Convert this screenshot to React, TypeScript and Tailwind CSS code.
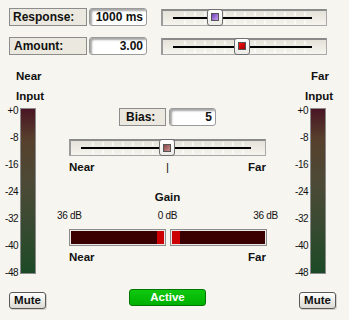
import React from "react";

const FONT = { fontFamily: '"Liberation Sans", Arial, sans-serif' };

function Slider({ width, thumb, color }: { width: number; thumb: number; color: string }) {
  const ticks: number[] = [];
  for (let x = 22; x <= width - 22; x += 10) ticks.push(x);
  return (
    <div
      className="relative h-[17px] border-t-2 border-l-2 border-b border-r border-t-[#8a8a8a] border-l-[#9a9a9a] border-b-[#a8a8a8] border-r-[#a8a8a8] bg-gradient-to-b from-[#e4e2d8] to-[#f5f4ee]"
      style={{ width }}
    >
      <svg className="absolute inset-0" width={width - 3} height={14}>
        {ticks.map((x) => (
          <g key={x}>
            <line x1={x} y1={1} x2={x} y2={5} stroke="#ffffff" strokeWidth={1.2} />
            <line x1={x} y1={9} x2={x} y2={13} stroke="#ffffff" strokeWidth={1.2} />
          </g>
        ))}
        <line x1={10} y1={7} x2={width - 17} y2={7} stroke="#000" strokeWidth={2} />
      </svg>
      <div
        className="absolute top-[-2px] w-[16px] h-[17px] rounded-[3px] border border-[#6e6e6e] bg-gradient-to-b from-white to-[#ecebe6] flex items-center justify-center"
        style={{ left: thumb - 2 }}
      >
        <div className="w-[8px] h-[8px] border border-[#555]" style={{ background: color }} />
      </div>
    </div>
  );
}

function LabelBox({ text, w, pl }: { text: string; w: number; pl: number }) {
  return (
    <div
      className="h-[18px] border border-[#8c8c8c] bg-[#ebe9df] text-[12px] font-bold leading-[16px] text-[#111]"
      style={{ width: w, paddingLeft: pl }}
    >
      {text}
    </div>
  );
}

function ValueBox({ text, w }: { text: string; w: number }) {
  return (
    <div
      className="h-[18px] rounded-[3px] border border-[#9a9a9a] bg-white shadow-[inset_2px_2px_2px_rgba(0,0,0,0.35)] text-right pr-[3px] text-[12px] font-bold leading-[16px] text-[#111]"
      style={{ width: w }}
    >
      {text}
    </div>
  );
}

function Meter() {
  return (
    <div className="w-[16px] h-[166px] border border-[#8a8a8a] bg-[linear-gradient(to_bottom,#4a1424_0%,#56402c_18%,#4c4a36_45%,#3a4a32_70%,#1c4a26_100%)]" />
  );
}

function Scale() {
  const labels = ["+0", "-8", "-16", "-24", "-32", "-40", "-48"];
  return (
    <div className="-mt-[2px] h-[172px] flex flex-col justify-between items-end text-[10px] leading-[10px] text-[#111] tracking-[-0.5px]">
      {labels.map((l) => (
        <div key={l}>{l}</div>
      ))}
    </div>
  );
}

function MuteBtn() {
  return (
    <div className="w-[37px] h-[17px] rounded-[3px] border border-[#5a5a5a] bg-gradient-to-b from-white to-[#dcdad2] text-[11.5px] font-bold leading-[15px] text-center text-[#111] shadow-[1px_1px_0_rgba(0,0,0,0.15)]">
      Mute
    </div>
  );
}

export default function App() {
  return (
    <div className="w-[349px] h-[320px] bg-[#f6f5ef] overflow-hidden text-[#111]" style={FONT}>
      {/* top rows */}
      <div className="pt-[8px] pl-[9px] flex flex-col gap-[11px]">
        <div className="flex items-center">
          <LabelBox text="Response:" w={78} pl={3} />
          <div className="ml-[2px]">
            <ValueBox text="1000 ms" w={58} />
          </div>
          <div className="ml-[14px]">
            <Slider width={166} thumb={46} color="linear-gradient(135deg,#7040b8,#c8a0f0)" />
          </div>
        </div>
        <div className="flex items-center">
          <LabelBox text="Amount:" w={78} pl={4} />
          <div className="ml-[2px]">
            <ValueBox text="3.00" w={58} />
          </div>
          <div className="ml-[14px]">
            <Slider width={166} thumb={73} color="linear-gradient(135deg,#ff1010,#a00000)" />
          </div>
        </div>
      </div>

      {/* middle */}
      <div className="mt-[14px] flex">
        {/* left column */}
        <div className="w-[54px] flex flex-col">
          <div className="pl-[16px] text-[11.5px] font-bold leading-[14px]">Near</div>
          <div className="pl-[16px] mt-[6px] text-[11.5px] font-bold leading-[14px]">Input</div>
          <div className="mt-[5px] flex items-start">
            <div className="w-[18px]">
              <Scale />
            </div>
            <div className="ml-[2px]">
              <Meter />
            </div>
          </div>
          <div className="mt-[14px] ml-[9px]">
            <MuteBtn />
          </div>
        </div>

        {/* center column */}
        <div className="w-[227px] flex flex-col items-center">
          <div className="mt-[39px] flex gap-[3px]">
            <LabelBox text="Bias:" w={47} pl={6} />
            <ValueBox text="5" w={47} />
          </div>
          <div className="mt-[13px]">
            <Slider width={197} thumb={90} color="linear-gradient(135deg,#8a4848,#d09090)" />
          </div>
          <div className="mt-[4px] w-[197px] grid grid-cols-3 text-[11.5px] font-bold leading-[14px]">
            <div>Near</div>
            <div className="text-center font-normal">|</div>
            <div className="text-right">Far</div>
          </div>
          <div className="mt-[16px] text-[11.5px] font-bold leading-[14px]">Gain</div>
          <div className="mt-[6px] w-[227px] px-[3px] grid grid-cols-3 text-[10px] leading-[12px] tracking-[-0.3px]">
            <div>36 dB</div>
            <div className="text-center">0 dB</div>
            <div className="text-right">36 dB</div>
          </div>
          <div className="mt-[7px] flex gap-[4px]">
            <div className="w-[97px] h-[17px] border border-[#8c8c8c] p-[1px] bg-[#e8e8e8]">
              <div className="h-full bg-[#3a0000] flex justify-end">
                <div className="w-[7px] h-full bg-[#cc0000]" />
              </div>
            </div>
            <div className="w-[97px] h-[17px] border border-[#8c8c8c] p-[1px] bg-[#e8e8e8]">
              <div className="h-full bg-[#3a0000] flex justify-start">
                <div className="w-[8px] h-full bg-[#cc0000]" />
              </div>
            </div>
          </div>
          <div className="mt-[4px] w-[197px] flex justify-between text-[11.5px] font-bold leading-[14px]">
            <div>Near</div>
            <div>Far</div>
          </div>
          <div className="mt-[25px] w-[77px] h-[17px] rounded-[3px] border border-[#007800] bg-gradient-to-b from-[#10c810] to-[#00b000] text-white text-[11.5px] font-bold leading-[15px] text-center">
            Active
          </div>
        </div>

        {/* right column */}
        <div className="w-[68px] flex flex-col">
          <div className="pl-[30px] text-[11.5px] font-bold leading-[14px]">Far</div>
          <div className="pl-[24px] mt-[6px] text-[11.5px] font-bold leading-[14px]">Input</div>
          <div className="mt-[5px] flex items-start">
            <div className="w-[27px]">
              <Scale />
            </div>
            <div className="ml-[2px]">
              <Meter />
            </div>
          </div>
          <div className="mt-[14px] ml-[18px]">
            <MuteBtn />
          </div>
        </div>
      </div>
    </div>
  );
}
